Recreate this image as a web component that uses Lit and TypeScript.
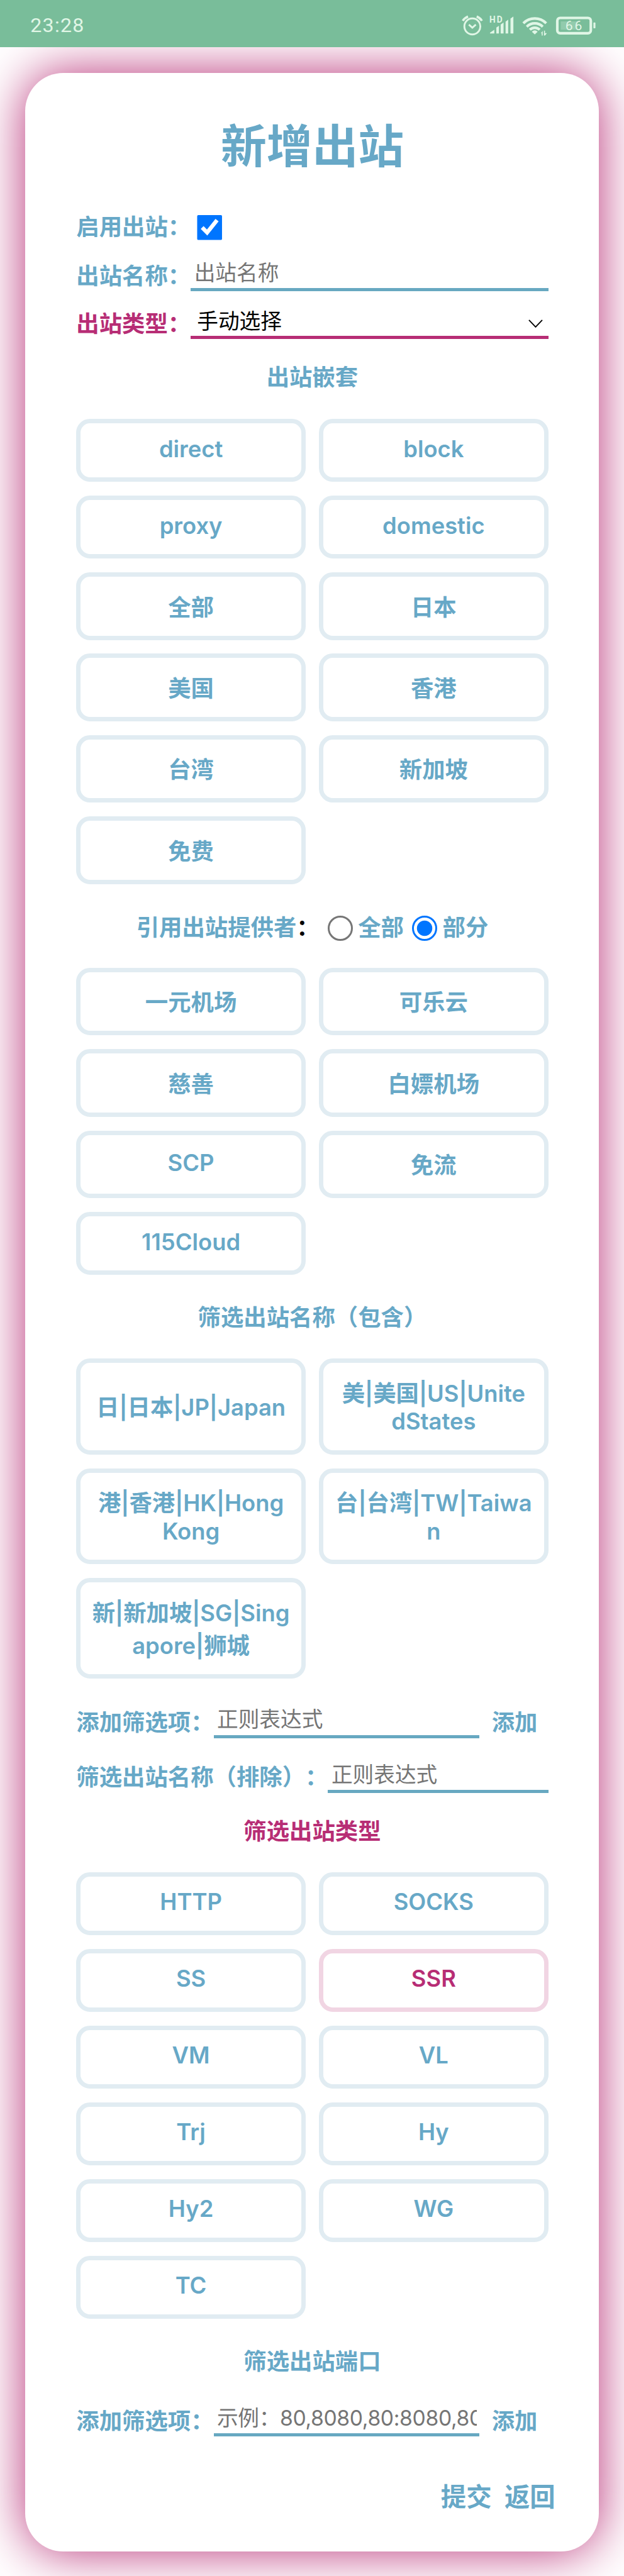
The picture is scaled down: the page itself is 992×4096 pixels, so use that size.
import { LitElement, html, css } from "lit";
import { customElement, property, state } from "lit/decorators.js";

const CJK = /[\u4e00-\u9fff]/;

@customElement("option-grid")
class OptionGrid extends LitElement {
  @property({ attribute: false }) items: string[] = [];
  @property() active = "";

  static styles = css`
    :host {
      display: block;
    }
    .grid {
      display: grid;
      grid-template-columns: 1fr 1fr;
      gap: 23.8px 23px;
    }
    .option {
      box-sizing: border-box;
      display: flex;
      flex-direction: column;
      justify-content: center;
      align-items: center;
      padding: 22.4px 0;
      border: 8px solid #e1ecf2;
      border-radius: 24px;
      background: #fff;
      color: #67a8c7;
      font: inherit;
      font-weight: 600;
      font-size: 39.6px;
      margin: 0;
    }
    .option.on {
      color: #b72d75;
      border-color: #f1d5e3;
    }
    .line {
      display: block;
      height: 49px;
      line-height: 45px;
      white-space: nowrap;
    }
    .line.cjk {
      height: 57px;
      line-height: 61px;
    }
  `;

  render() {
    return html`<div class="grid">
      ${this.items.map(
        (item) => html`<button class="option ${item === this.active ? "on" : ""}">
          ${item
            .split("\n")
            .map((l) => html`<span class="line ${CJK.test(l) ? "cjk" : ""}">${l}</span>`)}
        </button>`
      )}
    </div>`;
  }
}

@customElement("status-bar")
class StatusBar extends LitElement {
  static styles = css`
    :host {
      display: flex;
      justify-content: space-between;
      height: 82px;
      background: #79bd9a;
      position: relative;
      z-index: 1;
      color: #e0f6e6;
    }
    .time {
      padding-left: 52.5px;
      line-height: 88px;
      font-family: Roboto, sans-serif;
      font-weight: 400;
      font-size: 35px;
      letter-spacing: 1.4px;
    }
    svg {
      width: 300px;
      height: 82px;
      flex: none;
    }
    .hd {
      font: 700 15px Roboto, sans-serif;
    }
    .level {
      font: 400 23px Roboto, sans-serif;
    }
  `;

  render() {
    return html`<span class="time">23:28</span>
      <svg viewBox="780 0 300 82" fill="none" stroke="currentColor" stroke-width="3.2">
        <circle cx="818" cy="45.7" r="13.8" />
        <path d="M812 42.500l6 5.500 6-5.500" />
        <path d="M801.500 36q3-5 9-7.500M834.500 36q-3-5-9-7.500" stroke-width="4" />
        <g fill="currentColor" stroke="none">
          <text class="hd" x="847.4" y="38.8" textLength="22.5">HD</text>
          <path
            d="M848.5 58v-1.500l7.500-5V58zM859.500 58V47.500l4.500-3V58zM867 58V42.500l5-3.500v19zM875.500 58V37.500l4.500-3.500v24zM884 58V32l5-3.500V58z"
          />
          <path d="M926 59.500l-5-4.500q5-5 10 0z" />
          <path d="M936.500 57.500l3.200-4v8h-1.700v-4zM942 61.500V53h1.700v4.500h3.300l-3.300 4z" />
          <rect x="1027.500" y="39" width="3.500" height="10" rx="1" />
          <rect x="971" y="37" width="29" height="14.500" opacity="0.25" />
          <text class="level" x="979" y="52.500" textLength="29">66</text>
        </g>
        <g stroke-width="4.5">
          <path d="M906.200 40.200a28 28 0 0 1 39.600 0" />
          <path d="M912.200 46.200a19.500 19.500 0 0 1 27.600 0" />
          <path d="M917.500 51.500a12 12 0 0 1 17 0" />
          <rect x="965" y="31" width="58" height="26.500" rx="5" />
        </g>
      </svg>`;
  }
}

@customElement("app-root")
class AppRoot extends LitElement {
  @state() private outbounds = [
    "direct", "block", "proxy", "domestic", "全部", "日本",
    "美国", "香港", "台湾", "新加坡", "免费",
  ];
  @state() private providers = [
    "一元机场", "可乐云", "慈善", "白嫖机场", "SCP", "免流", "115Cloud",
  ];
  @state() private includes = [
    "日|日本|JP|Japan",
    "美|美国|US|Unite\ndStates",
    "港|香港|HK|Hong\nKong",
    "台|台湾|TW|Taiwa\nn",
    "新|新加坡|SG|Sing\napore|狮城",
  ];
  @state() private types = [
    "HTTP", "SOCKS", "SS", "SSR", "VM", "VL", "Trj", "Hy", "Hy2", "WG", "TC",
  ];

  static styles = css`
    :host {
      display: block;
      height: 4096px;
      overflow: hidden;
      background: #fff;
    }
    .page {
      zoom: 0.9187;
      font-family: Inter, "Noto Sans CJK SC", sans-serif;
      color: #67a8c7;
      font-size: 39.6px;
      font-weight: 700;
      text-spacing-trim: space-all;
    }
    .card {
      box-sizing: border-box;
      height: 4290px;
      margin: 44px 43.5px 42px 44px;
      padding: 74px 87.5px 0 88px;
      border-radius: 66px;
      background: #fff;
      box-shadow: 0 0 88px #b72d75;
    }
    h1 {
      margin: 0 0 60px;
      height: 104px;
      font-size: 79.2px;
      line-height: 108px;
      font-weight: 700;
      text-align: center;
    }
    .row {
      display: flex;
      height: 56px;
      line-height: 60px;
      white-space: nowrap;
    }
    .row.check {
      height: 60px;
      line-height: 62px;
      align-items: center;
      margin-bottom: 24px;
    }
    .row.name {
      margin-bottom: 27px;
    }
    .row.include {
      margin: 47px 0 39px;
    }
    .label {
      flex: none;
    }
    .accent {
      color: #b72d75;
    }
    input {
      margin: 0;
    }
    .box {
      width: 44px;
      height: 44px;
      margin-left: 11px;
    }
    .field {
      box-sizing: border-box;
      flex: 1;
      min-width: 0;
      height: 56px;
      padding: 0 5px 3px 6px;
      border: 0;
      border-bottom: 5.5px solid #67a8c1;
      border-radius: 0;
      background: none;
      outline: none;
      font-family: inherit;
      font-size: 36.67px;
      font-weight: 400;
    }
    .field::placeholder {
      color: #757575;
    }
    .ports {
      letter-spacing: -0.4px;
    }
    .select {
      display: flex;
      align-items: center;
      justify-content: space-between;
      line-height: 50px;
      padding: 0 9px 0 11px;
      border-color: #b72d75;
      color: #000;
    }
    .select svg {
      width: 25px;
      height: 15px;
      margin-top: 8px;
    }
    .add {
      flex: none;
      width: 98px;
      margin-left: 21px;
    }
    .heading {
      box-sizing: border-box;
      height: 60px;
      padding-top: 2px;
      line-height: 60px;
      display: flex;
      justify-content: center;
      align-items: center;
      white-space: nowrap;
    }
    .nest {
      margin: 36px 0 42px;
    }
    .provider {
      margin: 45px 0 40px;
    }
    .filter {
      margin: 43px 0 42px;
    }
    .kind {
      margin: 36px 0 41px;
    }
    .port {
      margin: 44px 0;
    }
    .colon {
      color: #000;
    }
    .radio {
      appearance: none;
      box-sizing: border-box;
      width: 44px;
      height: 44px;
      margin: 1px 9px 0 14px;
      border: 3.3px solid #767676;
      border-radius: 50%;
      background: #fff;
    }
    .radio:checked {
      border-color: #0075ff;
      background: radial-gradient(circle, #0075ff 12.8px, #fff 13.8px);
    }
    .actions {
      display: flex;
      justify-content: flex-end;
      gap: 22px;
      margin: 75px -12px 0 0;
      font-size: 44px;
      line-height: 60px;
    }
  `;

  render() {
    return html`<div class="page">
      <status-bar></status-bar>
      <main class="card">
        <h1>新增出站</h1>
        <div class="row check">
          <span class="label">启用出站：</span><input class="box" type="checkbox" checked />
        </div>
        <div class="row name">
          <span class="label">出站名称：</span><input class="field" placeholder="出站名称" />
        </div>
        <div class="row">
          <span class="label accent">出站类型：</span>
          <div class="field select">
            <span>手动选择</span>
            <svg viewBox="0 0 25 15" fill="none" stroke="#000" stroke-width="2">
              <path d="M1 1l11.500 12L24 1" />
            </svg>
          </div>
        </div>
        <div class="heading nest">出站嵌套</div>
        <option-grid .items=${this.outbounds}></option-grid>
        <div class="heading provider">
          <span>引用出站提供者<span class="colon">：</span></span>
          <input class="radio" type="radio" name="scope" /><span>全部</span>
          <input class="radio" type="radio" name="scope" checked /><span>部分</span>
        </div>
        <option-grid .items=${this.providers}></option-grid>
        <div class="heading filter">筛选出站名称（包含）</div>
        <option-grid .items=${this.includes}></option-grid>
        <div class="row include">
          <span class="label">添加筛选项：</span><input class="field" placeholder="正则表达式" />
          <span class="add">添加</span>
        </div>
        <div class="row">
          <span class="label">筛选出站名称（排除）：</span
          ><input class="field" placeholder="正则表达式" />
        </div>
        <div class="heading kind accent">筛选出站类型</div>
        <option-grid .items=${this.types} active="SSR"></option-grid>
        <div class="heading port">筛选出站端口</div>
        <div class="row">
          <span class="label">添加筛选项：</span
          ><input class="field ports" placeholder="示例：80,8080,80:8080,8080:" />
          <span class="add">添加</span>
        </div>
        <div class="actions"><span>提交</span><span>返回</span></div>
      </main>
    </div>`;
  }
}
